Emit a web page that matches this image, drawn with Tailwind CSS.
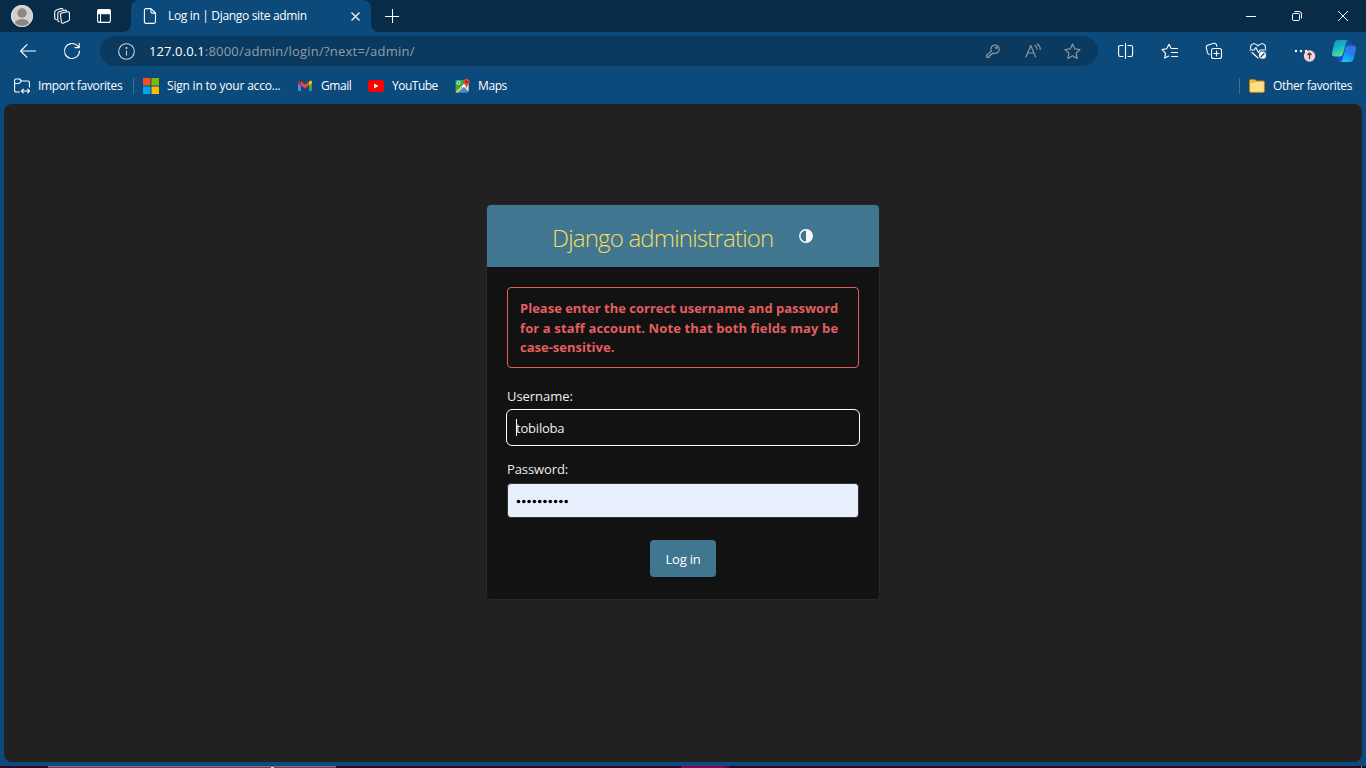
<!DOCTYPE html>
<html lang="en">
<head>
<meta charset="utf-8">
<title>Log in | Django site admin</title>
<script src="https://cdn.jsdelivr.net/npm/@tailwindcss/browser@4"></script>
</head>
<body class="w-[1366px] h-[768px] overflow-hidden bg-[#0c4a7b] font-['Open_Sans','Noto_Sans',sans-serif] text-white text-xs flex flex-col">

<!-- Title bar -->
<header class="h-8 shrink-0 bg-[#082b47] flex">
  <div class="w-11 flex items-center justify-center">
    <svg width="22" height="22" viewBox="0 0 22 22"><defs><clipPath id="av"><circle cx="11" cy="11" r="11"/></clipPath></defs><g clip-path="url(#av)"><rect width="22" height="22" fill="#d2d0ce"/><circle cx="11" cy="8" r="4.7" fill="#8a8886"/><ellipse cx="11" cy="19.500" rx="7.500" ry="5.500" fill="#8a8886"/></g><circle cx="11" cy="11" r="10.500" fill="none" stroke="#e1dfdd"/></svg>
  </div>
  <div class="w-9 flex items-center justify-center">
    <svg width="18" height="18" viewBox="0 0 18 18" fill="none" stroke="#fff" stroke-width="1.100" stroke-linejoin="round" stroke-linecap="round"><path d="M8 6.300l6.500-1.500q1.800-.3 1.900 1.200l.1 6q0 1.500-1.300 2l-4.700 2q-2 .7-2.100-1.300L7.500 8q0-1.300.5-1.700z"/><path d="M6.200 14.700q-1.300-.1-1.400-1.600V6.700q0-1.600 1.300-2l5.500-1.500q1.500-.3 1.900.8"/><path d="M3.400 12.800q-1.600-.3-1.700-1.800V5.300q0-1.500 1.300-2l4.800-1.700q1.700-.5 2.300.8"/></svg>
  </div>
  <div class="w-12 flex items-center justify-center">
    <svg width="14" height="14" viewBox="0 0 14 14" fill="none" stroke="#fff" stroke-width="1.100"><rect x=".6" y=".6" width="12.800" height="12.800" rx="2"/><path d="M1 1h12v3.800H1z" fill="#fff"/><path d="M3.500 5v8"/></svg>
  </div>
  <div class="w-[3px]"></div>
  <div class="relative w-60 bg-[#0c4a7b] rounded-t-lg flex items-center">
    <svg class="absolute -left-2 bottom-0" width="8" height="8"><path d="M8 0v8H0a8 8 0 0 0 8-8z" fill="#0c4a7b"/></svg>
    <svg class="absolute -right-2 bottom-0" width="8" height="8"><path d="M0 0v8h8a8 8 0 0 1-8-8z" fill="#0c4a7b"/></svg>
    <svg class="ml-3" width="14" height="16" viewBox="0 0 14 16" fill="none" stroke="#fff" stroke-width="1.100" stroke-linejoin="round"><path d="M3 .6h5L12.500 5v8.600q0 1.800-1.800 1.800H3q-1.600 0-1.600-1.800V2.400Q1.400.6 3 .6zM8 .8v3q0 1.300 1.300 1.300h3"/></svg>
    <span class="ml-[11px] w-[183px] whitespace-nowrap tracking-[-0.33px]">Log in | Django site admin</span>
    <svg width="9" height="9" viewBox="0 0 9 9" stroke="#fff" stroke-width="1.100"><path d="M.5 .5l8 8M8.500 .5l-8 8"/></svg>
  </div>
  <div class="w-[42px] flex items-center justify-center">
    <svg width="14" height="14" viewBox="0 0 14 14" stroke="#fff"><path d="M0 7.500h14M7.500 0v14"/></svg>
  </div>
  <div class="ml-auto flex">
    <div class="w-[46px] flex items-center justify-center"><svg width="10" height="10" stroke="#fff"><path d="M0 5.500h10"/></svg></div>
    <div class="w-[46px] flex items-center justify-center"><svg width="10" height="10" viewBox="0 0 10 10" fill="none" stroke="#fff"><rect x=".5" y="2.500" width="7" height="7" rx="1"/><path d="M2.500 .5h4.500q2.500 0 2.500 2.500v4.500"/></svg></div>
    <div class="w-[46px] flex items-center justify-center"><svg width="10" height="10" viewBox="0 0 10 10" stroke="#fff"><path d="M0 0l10 10M10 0L0 10"/></svg></div>
  </div>
</header>

<!-- Toolbar -->
<nav class="h-[38px] shrink-0 flex items-center pl-1.5 pr-0.5">
  <div class="w-11 flex justify-center"><svg width="16" height="14" viewBox="0 0 16 14" fill="none" stroke="#fff" stroke-width="1.100" stroke-linecap="round" stroke-linejoin="round"><path d="M15.500 7H.7M7 .7L.7 7 7 13.300"/></svg></div>
  <div class="w-11 flex justify-center"><svg width="18" height="18" viewBox="0 0 18 18" fill="none" stroke="#fff" stroke-width="1.100" stroke-linecap="round" stroke-linejoin="round"><path d="M16.500 9A7.500 7.500 0 1 1 14.200 3.600L16.200 5.600M16.200 1.300v4.300h-4.300"/></svg></div>
  <div class="ml-1.5 w-[998px] h-[30px] rounded-full bg-[#0a3a60] flex items-center pl-1.5 pr-[5px]">
    <div class="w-10 flex justify-center"><svg width="17" height="17" viewBox="0 0 17 17" fill="none" stroke="#c9d3dc" stroke-width="1.100"><circle cx="8.500" cy="8.500" r="7.800"/><path d="M8.500 7.500v5"/><circle cx="8.500" cy="5" r=".5" fill="#c9d3dc"/></svg></div>
    <span class="ml-[3px] pt-px text-[13px] whitespace-nowrap tracking-[0.22px] text-[#949da5]"><span class="text-white tracking-[0.1px]">127.0.0.1</span>:8000/admin/login/?next=/admin/</span>
    <div class="ml-auto flex text-[#8f979e]">
      <div class="w-10 flex justify-center"><svg width="16" height="16" viewBox="0 0 16 16" fill="none" stroke="currentColor" stroke-width="1.200" stroke-linejoin="round"><path d="M6.400 8.300A4.200 4.200 0 1 1 9 10.300L7.800 10.200 6.800 11.400H5.500v1.400H4v1.500H1.600v-2.200z"/><circle cx="11.300" cy="4.700" r=".7"/></svg></div>
      <div class="w-10 flex justify-center"><svg width="16" height="16" viewBox="0 0 16 16" fill="none" stroke="currentColor" stroke-width="1.200" stroke-linecap="round" stroke-linejoin="round"><path d="M1 14L5.800 2.500 10.600 14M2.800 10h6M10 2.500q1.900 1 2 3.600M12.200 1q3 1.800 3.100 5.400"/></svg></div>
      <div class="w-10 flex justify-center"><svg class="-ml-px" width="17" height="17" viewBox="0 0 17 17" fill="none" stroke="currentColor" stroke-width="1.200" stroke-linejoin="round"><path d="M8.500 1l2.200 4.800 5.300.7-3.900 3.600 1 5.300-4.600-2.600-4.600 2.600 1-5.300L1 6.500l5.300-.7z"/></svg></div>
    </div>
  </div>
  <div class="ml-1.5 flex items-center">
    <div class="w-11 flex justify-center"><svg width="16" height="16" viewBox="0 0 16 16" fill="none" stroke="#fff" stroke-width="1.100" stroke-linecap="round"><path d="M7.500 .5v15M5 2.500H2.300Q.6 2.500.6 4.200v7.600q0 1.700 1.700 1.700H5M10 2.500h2.900q1.700 0 1.700 1.700v7.600q0 1.700-1.700 1.700H10"/></svg></div>
    <div class="w-11 flex justify-center"><svg class="-ml-px" width="17" height="17" viewBox="0 0 17 17" fill="none" stroke="#fff" stroke-width="1.100" stroke-linecap="round" stroke-linejoin="round"><path d="M16.500 5.500H10.200L8 1.200 5.700 5.800 1 6.600l3.500 3.500-.8 5L7.800 13M10.500 9.500h6M10.500 13.500h6"/></svg></div>
    <div class="w-11 flex justify-center"><svg width="18" height="18" viewBox="0 0 18 18" fill="none" stroke="#fff" stroke-width="1.100" stroke-linecap="round" stroke-linejoin="round"><rect x="6.500" y="6.500" width="10" height="10" rx="2"/><path d="M11.500 9v5M9 11.500h5M4.300 12.500Q2.700 12 2.400 10.500L1.300 5.300Q1 3.700 2.600 3.200L9 1.300q1.700-.4 2.300 1.200l.6 1.700"/></svg></div>
    <div class="w-11 flex justify-center"><svg width="18" height="18" viewBox="0 0 18 18" fill="none" stroke="#fff" stroke-width="1.100" stroke-linecap="round" stroke-linejoin="round"><path d="M1.600 6.500Q1 2.500 4.500 1.800 7.500 1.500 9 4q1.500-2.500 4.500-2.200Q17 2.500 16.400 6.500M3 10.500l6 5.500M1 8h4.200l1.600-2.500 2.700 5L11.300 8H17"/><circle cx="13.500" cy="13.200" r="3.600" fill="#fff" stroke="none"/><path d="M12 14.700l3-3" stroke="#0c4a7b" stroke-width="1.300"/></svg></div>
    <div class="w-11 flex justify-center"><svg class="ml-1.5" width="24" height="24" viewBox="0 0 24 24"><g fill="#fff"><circle cx="3" cy="12" r="1.200"/><circle cx="8" cy="12" r="1.200"/><circle cx="13" cy="12" r="1.200"/></g><circle cx="16.500" cy="17" r="5.700" fill="#fbd3d3"/><path d="M16.500 20.300v-6.300M14.500 16l2-2 2 2" fill="none" stroke="#3c3c48" stroke-width="1.200"/></svg></div>
    <div class="w-10 flex justify-center"><svg width="26" height="24" viewBox="0 0 26 24"><defs><linearGradient id="c1" x2=".3" y2="1"><stop stop-color="#1392d0"/><stop offset=".5" stop-color="#13b5c8"/><stop offset="1" stop-color="#52e08e"/></linearGradient><linearGradient id="c2" x1=".8" x2=".3" y2="1"><stop stop-color="#3a6fd8"/><stop offset=".5" stop-color="#1e86f0"/><stop offset="1" stop-color="#17c6ee"/></linearGradient></defs><path d="M12 1h6q2 0 2.500 2l1.200 4.500H12z" fill="#11539c"/><path d="M5 16.500h9L12 23H9.500Q7 23 6.400 20.700z" fill="#1d48d8"/><path d="M7 1h10q-1.500.7-2 2.800L12 15q-.8 2.600-3.500 2.600H4Q.5 17.600 1 14L3.300 4Q4.200 1 7 1z" fill="url(#c1)"/><path d="M17.700 6.500H22q3.700 0 3 3.500l-2.500 10q-.8 3-3.500 3H9.500q1.500-.7 2-2.800L14.300 9q.7-2.500 3.400-2.500z" fill="url(#c2)"/></svg></div>
  </div>
</nav>

<!-- Favorites bar -->
<nav class="h-8 shrink-0 flex items-center pl-3.5 pr-3.5 whitespace-nowrap">
  <svg width="17" height="16" viewBox="0 0 17 16" fill="none" stroke="#fff" stroke-width="1.100" stroke-linecap="round" stroke-linejoin="round"><path d="M5.500 14H2Q.6 14 .6 12.500V2.500Q.6 1 2 1h3.500L7.500 3H14q1.400 0 1.400 1.500V9M.8 5.500h3.500q1 0 1.700-.8L7.500 3M7.500 13h8M9.300 11.200l-1.800 1.800 1.800 1.800M13.700 11.200l1.800 1.800-1.800 1.800"/></svg>
  <span class="ml-[7px] w-[95px] tracking-[-0.35px]">Import favorites</span>
  <div class="w-px h-4 bg-[#3b6f97]"></div>
  <svg class="ml-[9px]" width="16" height="16"><path fill="#f25022" d="M0 0h7.500v7.500H0z"/><path fill="#7fba00" d="M8.500 0H16v7.500H8.500z"/><path fill="#00a4ef" d="M0 8.500h7.500V16H0z"/><path fill="#ffb900" d="M8.500 8.500H16V16H8.500z"/></svg>
  <span class="ml-2 w-[130px] tracking-[-0.2px]">Sign in to your acco...</span>
  <svg width="16" height="12" viewBox="0 0 16 12"><path fill="#4285f4" d="M1 3l3 2.200V11H2q-1 0-1-1z"/><path fill="#34a853" d="M15 3l-3 2.200V11h2q1 0 1-1z"/><path fill="#c5221f" d="M1 2.200Q1-.3 3.300 1L4 1.500v4L1 3.300z"/><path fill="#fbbc04" d="M15 2.200Q15-.3 12.700 1l-.7.500v4l3-2.200z"/><path fill="#ea4335" d="M4 1.500l4 3 4-3v4l-4 3-4-3z"/></svg>
  <span class="ml-2 w-[47px] tracking-[-0.45px]">Gmail</span>
  <svg width="16" height="12"><rect width="16" height="12" rx="3" fill="#f00"/><path d="M6 3.500v5L10.500 6z" fill="#fff"/></svg>
  <span class="ml-2 w-[63px] tracking-[-0.5px]">YouTube</span>
  <svg width="16" height="16" viewBox="0 0 16 16"><rect x=".5" y="2" width="13" height="12.500" rx="1.500" fill="#34a853"/><path d="M13.500 5v8.500L8 8z" fill="#e8eaed"/><path d="M1.500 14.500l6-5.500 5.500 5.500z" fill="#4285f4"/><path d="M.8 13.700L10.500 4.500l1.700 1.600L2.500 14.500z" fill="#fff"/><path d="M1.500 14.300l5.700-5.400" stroke="#fbbc04" stroke-width="1.500"/><circle cx="3.500" cy="5" r="1.600" fill="none" stroke="#d5f0dc"/><path d="M11.500 10.500Q11.300 8 9 5.500A3 3 0 1 1 14 5.500Q11.800 8 11.500 10.500z" fill="#ea4335"/><circle cx="11.500" cy="3.800" r="1.100" fill="#811d17"/></svg>
  <span class="ml-[7px] tracking-[-0.4px]">Maps</span>
  <div class="ml-auto w-px h-4 bg-[#3b6f97]"></div>
  <svg class="ml-[9px]" width="16" height="14" viewBox="0 0 16 14"><path d="M.6 2Q.6.600 2 .6h3.500L7.500 2H14q1.400 0 1.400 1.300v8.800q0 1.300-1.400 1.300H2q-1.400 0-1.400-1.300z" fill="#ffdf85" stroke="#b8860b"/><path d="M1 1h4.700L7 2.200 5.500 4H1z" fill="#f5bd28"/></svg>
  <span class="ml-2 w-[79px] tracking-[-0.35px]">Other favorites</span>
</nav>

<!-- Page viewport -->
<main class="mt-0.5 mx-1 h-[658px] shrink-0 bg-[#212121] rounded-lg flex flex-col items-center pt-[101px] text-[13px]">
  <section class="w-[392px] h-[394px] bg-[#121212] ring-1 ring-[#282828] rounded overflow-hidden flex flex-col">
    <div class="h-[62px] shrink-0 bg-[#417690] flex items-center pl-[65px] pt-[3px]">
      <h1 class="w-[223px] text-2xl font-light text-[#f5dd5d] whitespace-nowrap tracking-[-0.8px]">Django administration</h1>
      <svg class="ml-6 mb-1" width="14" height="14" viewBox="0 0 14 14"><circle cx="7" cy="7" r="6.200" fill="none" stroke="#fff" stroke-width="1.400"/><path d="M7 .6a6.400 6.400 0 0 1 0 12.800z" fill="#f7f7f7"/></svg>
    </div>
    <div class="px-5 pt-5 flex flex-col">
      <p class="h-[81px] border border-[#e35f5f] rounded px-3 pt-[11px] font-bold text-[#e35f5f] leading-[19.500px] whitespace-nowrap">Please enter the correct username and password<br><span class="tracking-[0.12px]">for a staff account. Note that both fields may be</span><br>case-sensitive.</p>
      <label class="mt-[18px] h-5 leading-5 text-[#eee] tracking-[-0.05px]">Username:</label>
      <div class="-mx-px mt-[3px] h-[37px] border border-white rounded-md flex items-center pl-[9px] text-[#eee]"><span class="w-px h-[17px] bg-white"></span><span class="-ml-px pt-0.5 tracking-[-0.2px]">tobiloba</span></div>
      <label class="mt-[13px] h-5 leading-5 text-[#eee] tracking-[-0.1px]">Password:</label>
      <div class="mt-1 h-[35px] bg-[#e8f0fe] border border-[#353535] rounded flex items-center pl-2">
        <svg class="mt-px" width="54" height="5" fill="#000"><circle cx="2.500" cy="2.500" r="1.800"/><circle cx="7.800" cy="2.500" r="1.800"/><circle cx="13.100" cy="2.500" r="1.800"/><circle cx="18.400" cy="2.500" r="1.800"/><circle cx="23.700" cy="2.500" r="1.800"/><circle cx="29" cy="2.500" r="1.800"/><circle cx="34.300" cy="2.500" r="1.800"/><circle cx="39.600" cy="2.500" r="1.800"/><circle cx="44.900" cy="2.500" r="1.800"/><circle cx="50.200" cy="2.500" r="1.800"/></svg>
      </div>
      <button class="mt-[22px] self-center w-[66px] h-[37px] pt-0.5 rounded bg-[#417690] text-white tracking-[-0.2px]">Log in</button>
    </div>
  </section>
</main>

<!-- Strip of the desktop taskbar -->
<footer class="mt-1 h-0.5 shrink-0 bg-[#2d0829] flex">
  <div class="ml-12 w-72 bg-[#6e3a5e] border-t border-[#94658a] flex"><span class="ml-[223px] w-[3px] h-px bg-[#e5d5e2]"></span></div>
  <div class="ml-[345px] w-11 bg-[#8c0059]"></div>
  <div class="w-1 bg-[#650642]"></div>
  <div class="ml-auto mr-1 w-px bg-[#94738f]"></div>
</footer>
</body>
</html>
